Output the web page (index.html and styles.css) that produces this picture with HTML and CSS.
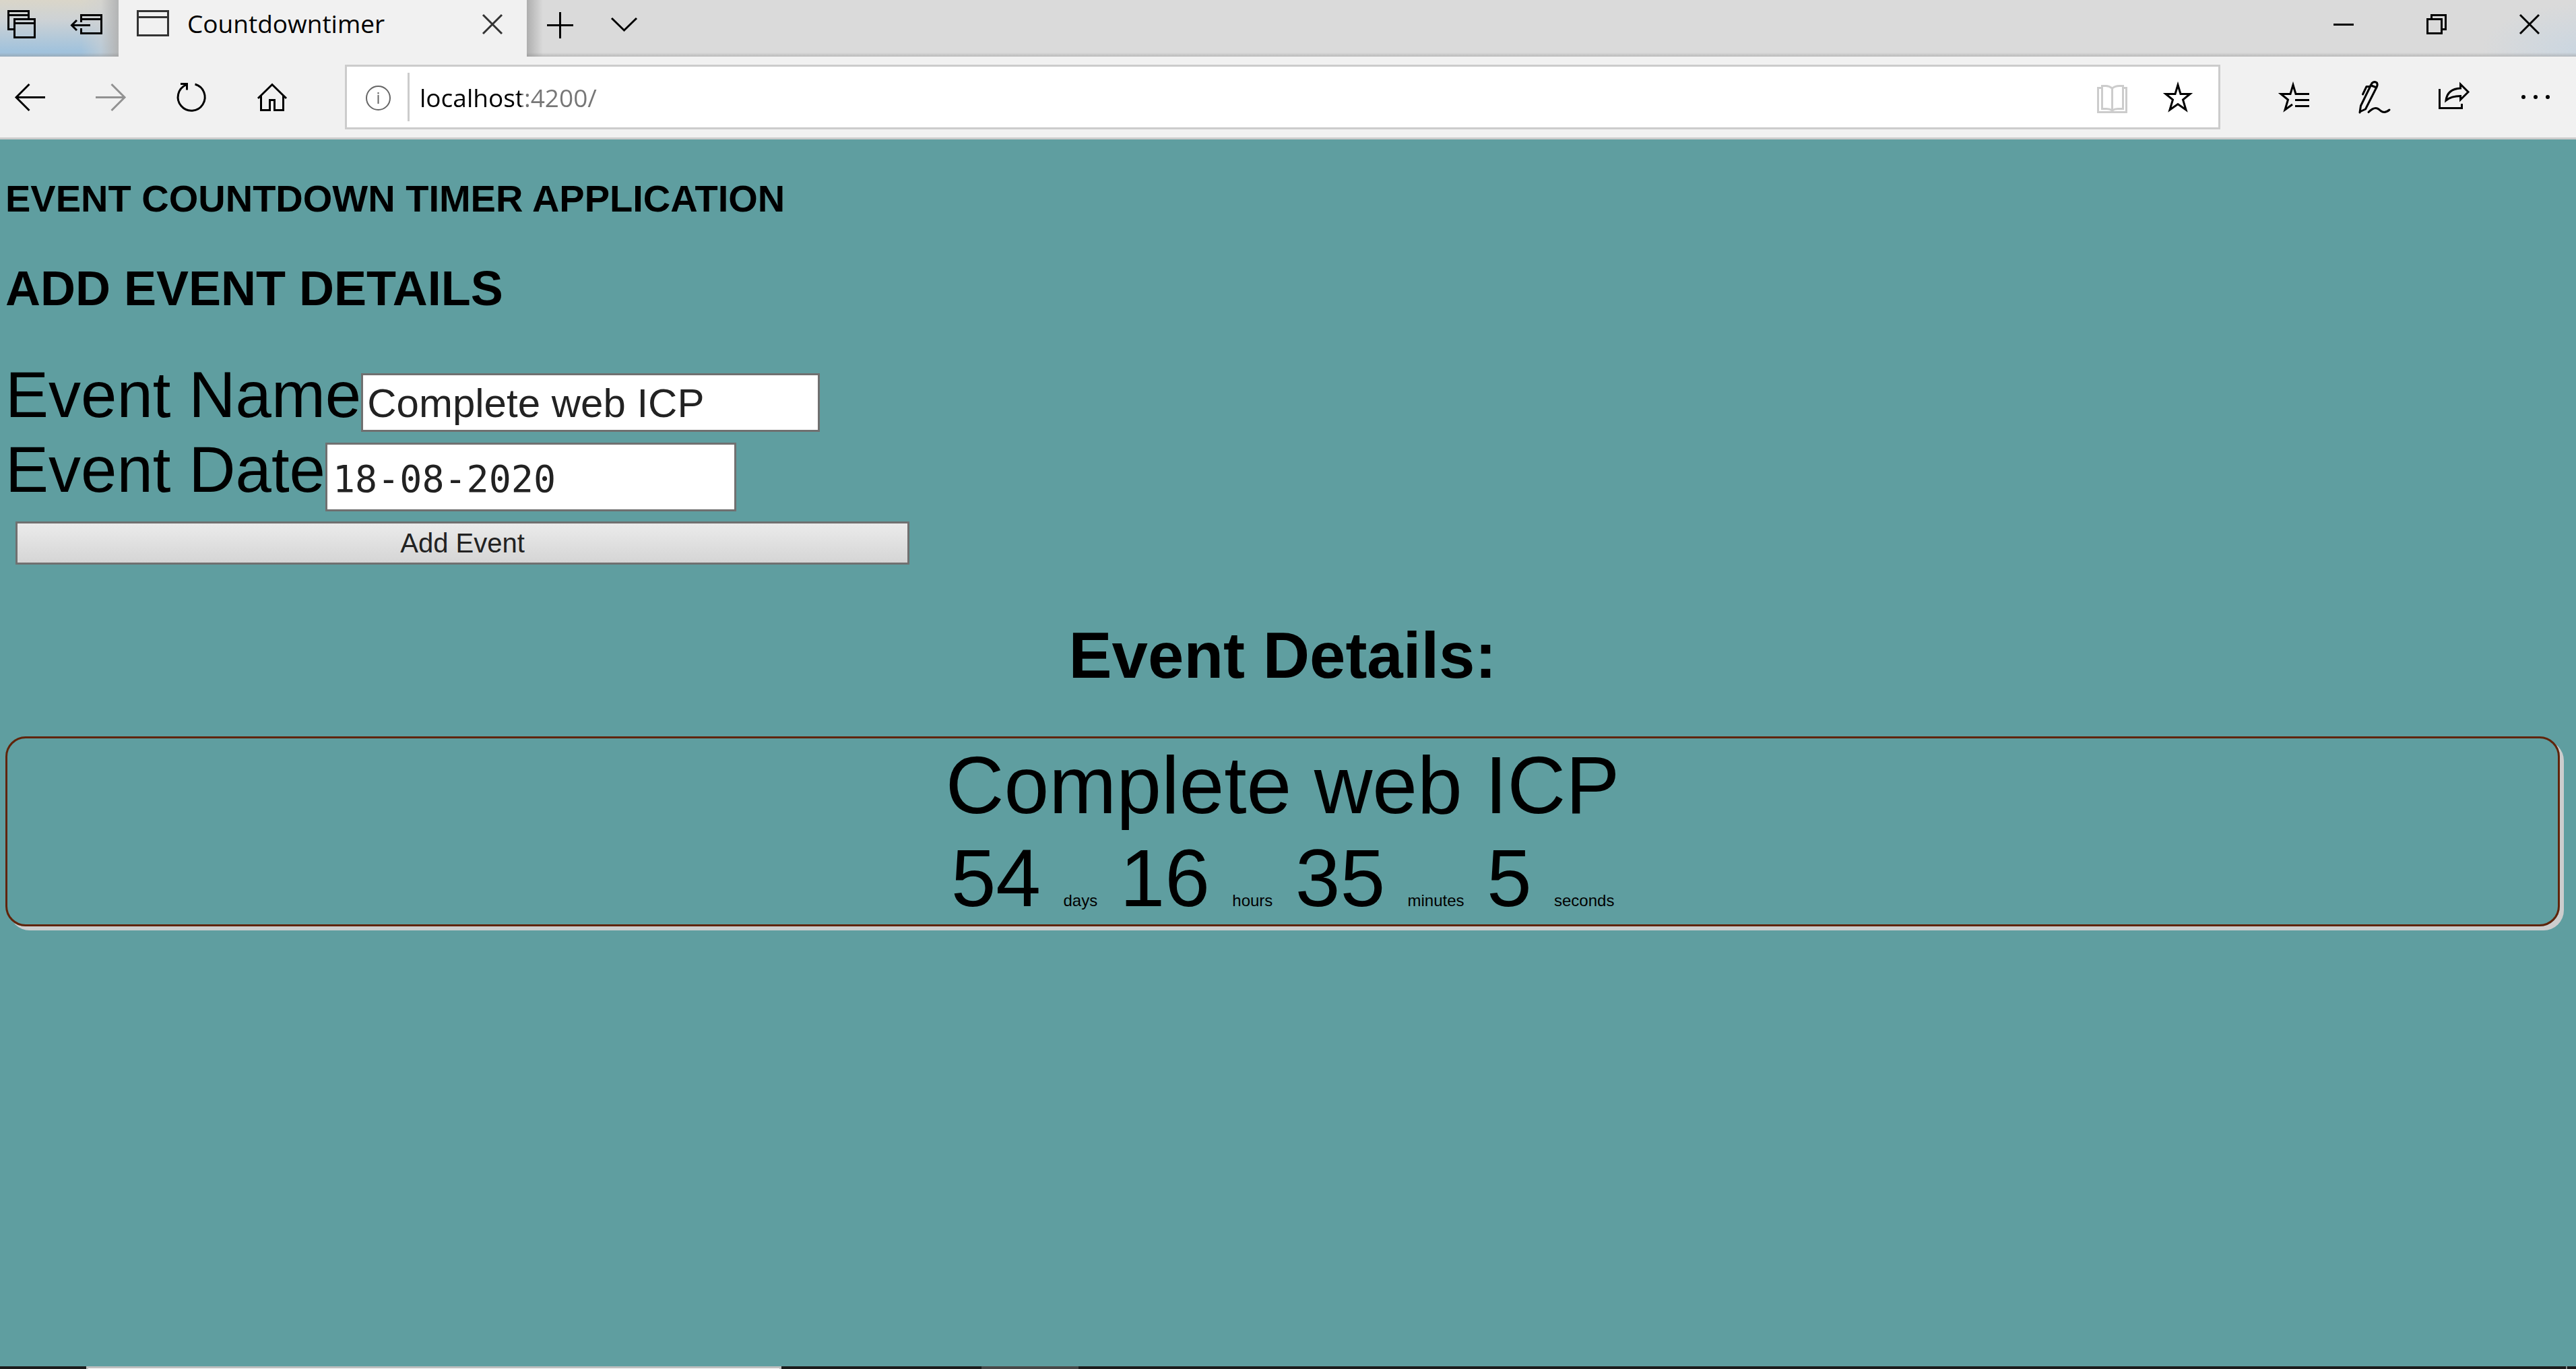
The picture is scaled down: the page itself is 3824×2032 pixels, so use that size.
FILE: index.html
```html
<!DOCTYPE html>
<html lang="en">
<head>
<meta charset="utf-8">
<title>Countdowntimer</title>
<link rel="stylesheet" href="styles.css">
</head>
<body>
<header class="browser">
  <div class="titlebar">
    <button class="chrome-btn" aria-label="Tabs you've set aside"><svg width="88" height="84" viewBox="0 0 88 84"><path d="M21.500 43.500H12.500V16.500H42.500V28M12.500 22.500H42.500M21.500 28.500H51.500V55.500H21.500ZM21.500 34.500H51.500"/></svg></button>
    <button class="chrome-btn" aria-label="Set these tabs aside"><svg width="88" height="84" viewBox="88 0 88 84"><path d="M120.500 33V22.500H150.500V49.500H120.500V42M120.500 28.500H150.500M134 37.500H106M114 30L106.500 37.500L114 45"/></svg></button>
    <div class="tab">
      <svg class="tab-icon" width="102" height="84" viewBox="176 0 102 84"><path d="M204.500 16.500H249.500V52.500H204.500ZM204.500 25.500H249.500"/></svg>
      <span class="tab-title">Countdowntimer</span>
      <button class="chrome-btn tab-close" aria-label="Close tab"><svg width="100" height="84" viewBox="682 0 100 84"><path d="M717 22L745 50M745 22L717 50"/></svg></button>
    </div>
    <div class="strip">
      <button class="chrome-btn" aria-label="New tab"><svg width="98" height="84" viewBox="782 0 98 84"><path d="M831.500 18V57M812 37.500H851"/></svg></button>
      <button class="chrome-btn" aria-label="Show tab previews"><svg width="98" height="84" viewBox="880 0 98 84"><path d="M908 27L926.500 45L945 27"/></svg></button>
      <div class="window-controls">
        <button class="chrome-btn" aria-label="Minimize"><svg width="138" height="84" viewBox="3410 0 138 84"><path d="M3464 36.500H3494"/></svg></button>
        <button class="chrome-btn" aria-label="Restore"><svg width="138" height="84" viewBox="3548 0 138 84"><path d="M3603.500 28.500H3624.500V49.500H3603.500ZM3609.500 28V22.500H3630.500V43.500H3625"/></svg></button>
        <button class="chrome-btn" aria-label="Close"><svg width="138" height="84" viewBox="3686 0 138 84"><path d="M3741 22L3769 50M3769 22L3741 50"/></svg></button>
      </div>
    </div>
  </div>
  <div class="toolbar">
    <nav class="tools">
      <button class="chrome-btn" aria-label="Back"><svg width="104" height="120" viewBox="0 84 104 120"><path d="M67 144.500H24M43.500 125L24 144.500L43.500 164"/></svg></button>
      <button class="chrome-btn faded" aria-label="Forward"><svg width="120" height="120" viewBox="104 84 120 120"><path d="M142 144.500H185M165.500 125L185 144.500L165.500 164"/></svg></button>
      <button class="chrome-btn" aria-label="Refresh"><svg width="120" height="120" viewBox="224 84 120 120"><path d="M289.500 125A20 20 0 1 1 276 126M268 124.500H277.500V133.500"/></svg></button>
      <button class="chrome-btn" aria-label="Home"><svg width="120" height="120" viewBox="344 84 120 120"><path d="M383 146L404 125.500L425 146M387.500 142V163.500H400.500V148.500H407.500V163.500H420.500V142"/></svg></button>
    </nav>
    <div class="address">
      <button class="chrome-btn info" aria-label="Site information"><svg width="90" height="90" viewBox="515 99 90 90"><circle cx="561.500" cy="145.500" r="17.500"/><path d="M561.500 141V154M561.500 137V139.500"/></svg></button>
      <input class="url" type="text" aria-label="Address" value="localhost:4200/">
      <button class="chrome-btn reading" aria-label="Reading view"><svg width="100" height="90" viewBox="3083 99 100 90"><path d="M3120 130.500H3114.500V166.500H3156.500V130.500H3151M3135.500 131Q3131 127.500 3126 127.500H3120.500V161.500H3127Q3132 161.500 3135.500 164Q3139 161.500 3144 161.500H3151.500V127.500H3146Q3140 127.500 3135.500 131V163"/></svg></button>
      <button class="chrome-btn" aria-label="Add to favorites"><svg width="110" height="90" viewBox="3183 99 110 90"><path d="M3233 126L3237 139.500H3251L3240.500 148L3245 163L3233 154.500L3221 163L3225.500 148L3215 139.500H3229Z"/></svg></button>
    </div>
    <nav class="tools">
      <button class="chrome-btn" aria-label="Favorites"><svg width="120" height="120" viewBox="3344 84 120 120"><path d="M3428 139.500H3408L3404 126L3400 139.500H3386L3396.500 148L3392 163L3403 155M3407 148.500H3428M3407 157.500H3428"/></svg></button>
      <button class="chrome-btn" aria-label="Add notes"><svg width="120" height="120" viewBox="3464 84 120 120"><path class="round" d="M3503 167L3504.500 157L3521 123.500Q3525 120 3528.500 123Q3530 126 3528 129.500L3511.500 162L3504 165.500M3519 126.500L3528 130M3507.500 140L3513 128.500L3518 128.500M3516 166.500Q3522 160.500 3526.500 160.500Q3530 160.500 3534 164.500Q3540 169 3547 163"/></svg></button>
      <button class="chrome-btn" aria-label="Share"><svg width="120" height="120" viewBox="3584 84 120 120"><path d="M3621.500 132V160.500H3654.500V154M3652.500 125L3664 136.500L3652.500 148V142.500Q3639 142.500 3631 149Q3633 132 3652.500 131Z"/></svg></button>
      <button class="chrome-btn" aria-label="Settings and more"><svg class="dots" width="120" height="120" viewBox="3704 84 120 120"><circle cx="3746" cy="144" r="3"/><circle cx="3764" cy="144" r="3"/><circle cx="3782" cy="144" r="3"/></svg></button>
    </nav>
  </div>
</header>
<main class="page">
  <h1 class="app-title">EVENT COUNTDOWN TIMER APPLICATION</h1>
  <h2 class="form-title">ADD EVENT DETAILS</h2>
  <form class="event-form">
    <div class="field"><label for="event-name">Event Name</label><input class="name-input" id="event-name" type="text" value="Complete web ICP"></div>
    <div class="field"><label for="event-date">Event Date</label><input class="date-input" id="event-date" type="text" value="18-08-2020"></div>
    <button class="add-button" type="button">Add Event</button>
  </form>
  <h2 class="details-title">Event Details:</h2>
  <section class="card">
    <div>Complete web ICP</div>
    <div>54 <small>days</small> 16 <small>hours</small> 35 <small>minutes</small> 5 <small>seconds</small></div>
  </section>
</main>
<footer class="taskbar"><span class="task-search"></span><span class="task-active"></span><span class="task-desktop"></span></footer>
</body>
</html>
```
FILE: styles.css
```css
* { box-sizing: border-box; }

body {
  margin: 0;
  min-height: 100vh;
  display: flex;
  flex-direction: column;
  background: #5f9ea0;
  color: #000;
  font-family: "Liberation Sans", Arial, sans-serif;
}

button, input { font: inherit; color: inherit; border-radius: 0; }

/* Browser frame */
.browser { font-family: "Open Sans", "Noto Sans", sans-serif; }

.titlebar {
  display: flex;
  height: 84px;
  background:
    linear-gradient(to right, transparent 150px, #8886 176px, transparent 176px),
    linear-gradient(to top, #8886, transparent 6px),
    linear-gradient(to right, transparent 120px, #cfd1d2 176px),
    linear-gradient(to bottom, #dad6c9, #cdd2d5 35%, #a1c2dc 90%);
}

.chrome-btn {
  display: block;
  flex: none;
  margin: 0;
  padding: 0;
  border: 0;
  background: none;
}

svg {
  display: block;
  fill: none;
  stroke: #000;
  stroke-width: 3px;
  stroke-miterlimit: 10;
}

.round { stroke-linecap: round; stroke-linejoin: round; }
.dots { fill: #000; stroke: none; }
.faded svg { stroke: #929292; }
.info svg { stroke: #666; stroke-width: 2px; }
.reading svg { stroke: #ccc; }

.tab {
  display: flex;
  align-items: center;
  flex: none;
  width: 606px;
  background: #f1f1f1;
}

.tab svg { stroke: #333; }
.tab-title { flex: 1; font-size: 37px; line-height: 54px; padding-bottom: 14px; white-space: nowrap; }

.strip {
  display: flex;
  flex: 1;
  background:
    linear-gradient(to right, #8888, transparent 24px),
    linear-gradient(to top, #8886, transparent 6px),
    radial-gradient(ellipse 140px 70px at 100% 90%, #cbd6e0, transparent),
    #dadada;
}

.window-controls { display: flex; margin-left: auto; }

.toolbar {
  display: flex;
  align-items: center;
  gap: 48px;
  background: #f1f1f1;
  border-bottom: 3px solid #ccc;
}

.tools { display: flex; flex: none; }

.address {
  display: flex;
  align-items: center;
  flex: 1;
  height: 96px;
  border: 3px solid #ccc;
  background: #fff;
}

.url {
  flex: 1;
  height: 72px;
  padding: 0 0 0 15px;
  border: 0;
  border-left: 3px solid #ccc;
  font-size: 37px;
  color: transparent;
  background: linear-gradient(to right, #000 166px, #767676 166px) text;
}

/* Countdown page */
.page { flex: 1; padding: 56px 24px 0 8px; }

h1, h2 { margin: 0; }
.app-title { font-size: 56px; line-height: 64px; }
.form-title { margin-top: 59px; font-size: 72px; line-height: 84px; }
.event-form { margin-top: 60px; }

.field { display: flex; align-items: baseline; font-size: 96px; line-height: 111px; }

.field input {
  margin: 0;
  border: 3px solid #707070;
  background: #fff;
  color: #222;
}

.field .name-input {
  width: 681px;
  height: 87px;
  padding: 7px 6px 5px;
  font-size: 60px;
  line-height: 69px;
}

.field .date-input {
  width: 610px;
  height: 102px;
  padding: 17px 8px 10px;
  font-family: "DejaVu Sans Mono", monospace;
  font-size: 55px;
  line-height: 69px;
}

.add-button {
  display: block;
  width: 35%;
  margin: 15px 0 0 15px;
  padding: 6px;
  border: 3px solid #707070;
  background: linear-gradient(#ebebeb, #d5d5d5);
  color: #222;
  font-size: 40px;
  line-height: 46px;
}

.details-title {
  margin: 79px 0 65px;
  font-size: 96px;
  line-height: 111px;
  text-align: center;
}

.card {
  border: 3px solid #60240a;
  border-radius: 30px;
  box-shadow: 6px 6px 0 #cdcdcd;
  font-size: 120px;
  line-height: 138px;
  text-align: center;
}

.card small { font-size: 24px; line-height: 24px; }

/* Top edge of the taskbar */
.taskbar { display: flex; height: 4px; background: #1c1c1c; }
.task-search { width: 1032px; margin-left: 128px; border: 3px solid #bfbfbf; border-bottom: 0; background: #fff; }
.task-active { width: 144px; margin-left: 297px; background: #484848; }
.task-desktop { width: 2px; margin-left: auto; margin-right: 13px; background: #888; }
```
